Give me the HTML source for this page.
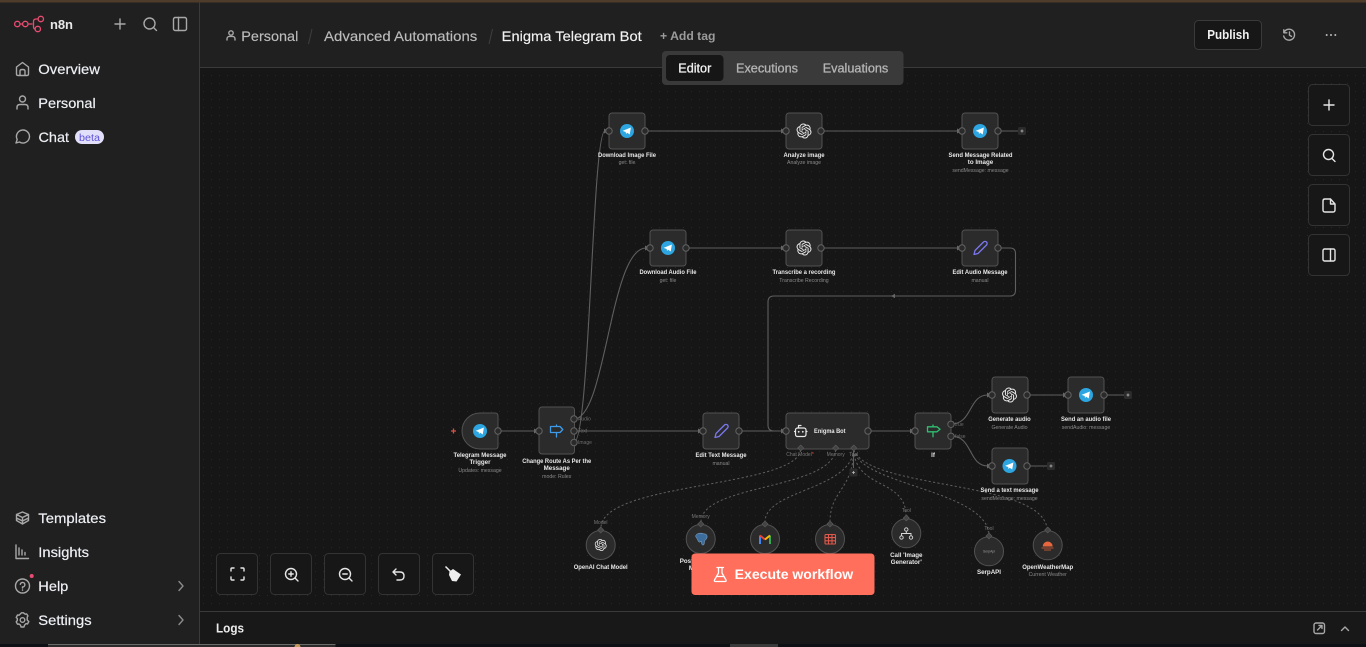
<!DOCTYPE html>
<html lang="en">
<head>
<meta charset="utf-8">
<title>Enigma Telegram Bot - n8n</title>
<style>
html,body{margin:0;padding:0;width:1366px;height:647px;overflow:hidden;background:#161616}
svg{display:block;font-family:"Liberation Sans",sans-serif}
.n{fill:#2b2b2b;stroke:#525252;stroke-width:1}
.p{fill:#2a2a2a;stroke:#636363;stroke-width:1}
.e{fill:none;stroke:#5f5f5f;stroke-width:1.1}
.d{fill:none;stroke:#5f5f5f;stroke-width:1;stroke-dasharray:2.2 2.2}
.a{fill:#666}
.t{font-size:6.2px;font-weight:700;fill:#e8e8e8;text-anchor:middle}
.s{font-size:5.2px;fill:#8a8a8a;text-anchor:middle}
.l{font-size:5px;fill:#777;text-anchor:middle}
.pl{font-size:5px;fill:#6d6d6d}
.m{font-size:14px;fill:#eef0f5;stroke:#eef0f5;stroke-width:.2px}
.tab{font-size:13px;fill:#b4b4b4;stroke:#b4b4b4;stroke-width:.3px}
.i{fill:none;stroke:#a8a8a8;stroke-width:1.4;stroke-linecap:round;stroke-linejoin:round}
.w{fill:none;stroke:#e6e6e6;stroke-width:1.4;stroke-linecap:round;stroke-linejoin:round}
.b{fill:#171717;stroke:#333;stroke-width:1}
</style>
</head>
<body>
<svg width="1366" height="647" viewBox="0 0 1366 647" xmlns="http://www.w3.org/2000/svg">
<defs>
<pattern id="dots" x="0" y="0" width="8" height="8" patternUnits="userSpaceOnUse"><rect x="3" y="3" width="1" height="1" fill="#272727"/></pattern>
<symbol id="tg" viewBox="-7 -7 14 14" overflow="visible"><circle r="7" fill="#2ca5e0"/><path d="M-4.400 -.1L3.900 -3.500L2.700 3.500L.2 1.800L-1 3L-1.300 1Z" fill="#fff"/></symbol>
<symbol id="oai" viewBox="0 0 24 24"><path fill="#e8e8e8" d="M22.2819 9.8211a5.9847 5.9847 0 0 0-.5157-4.9108 6.0462 6.0462 0 0 0-6.5098-2.9A6.0651 6.0651 0 0 0 4.9807 4.1818a5.9847 5.9847 0 0 0-3.9977 2.9 6.0462 6.0462 0 0 0 .7427 7.0966 5.98 5.98 0 0 0 .511 4.9107 6.051 6.051 0 0 0 6.5146 2.9001A5.9847 5.9847 0 0 0 13.2599 24a6.0557 6.0557 0 0 0 5.7718-4.2058 5.9894 5.9894 0 0 0 3.9977-2.9001 6.0557 6.0557 0 0 0-.7475-7.0729zm-9.022 12.6081a4.4755 4.4755 0 0 1-2.8764-1.0408l.1419-.0804 4.7783-2.7582a.7948.7948 0 0 0 .3927-.6813v-6.7369l2.02 1.1686a.071.071 0 0 1 .038.052v5.5826a4.504 4.504 0 0 1-4.4945 4.4944zm-9.6607-4.1254a4.4708 4.4708 0 0 1-.5346-3.0137l.142.0852 4.783 2.7582a.7712.7712 0 0 0 .7806 0l5.8428-3.3685v2.3324a.0804.0804 0 0 1-.0332.0615L9.74 19.9502a4.4992 4.4992 0 0 1-6.1408-1.6464zM2.3408 7.8956a4.485 4.485 0 0 1 2.3655-1.9728V11.6a.7664.7664 0 0 0 .3879.6765l5.8144 3.3543-2.0201 1.1685a.0757.0757 0 0 1-.071 0l-4.8303-2.7865A4.504 4.504 0 0 1 2.3408 7.872zm16.5963 3.8558L13.1038 8.364 15.1192 7.2a.0757.0757 0 0 1 .071 0l4.8303 2.7913a4.4944 4.4944 0 0 1-.6765 8.1042v-5.6772a.79.79 0 0 0-.407-.667zm2.0107-3.0231l-.142-.0852-4.7735-2.7818a.7759.7759 0 0 0-.7854 0L9.409 9.2297V6.8974a.0662.0662 0 0 1 .0284-.0615l4.8303-2.7866a4.4992 4.4992 0 0 1 6.6802 4.66zM8.3065 12.863l-2.02-1.1638a.0804.0804 0 0 1-.038-.0567V6.0742a4.4992 4.4992 0 0 1 7.3757-3.4537l-.142.0805L8.704 5.459a.7948.7948 0 0 0-.3927.6813zm1.0976-2.3654l2.602-1.4998 2.6069 1.4998v2.9994l-2.5974 1.4997-2.6067-1.4997Z"/></symbol>
</defs>

<!-- base -->
<rect width="1366" height="647" fill="#161616"/>
<rect x="200" y="68" width="1166" height="543" fill="url(#dots)"/>

<!-- edges -->
<path class="e" d="M498 431H535M574 431H699M739 431H782M869 431H911M1027 395H1064M645 131H782M821 131H958M686 248H782M821 248H958M998 131H1018M1104 395H1124M1027 466H1047"/>
<path class="e" d="M574 442C590 442 592 131 605 131"/>
<path class="e" d="M574 419C606 419 610 248 646 248"/>
<path class="e" d="M951 424C973 424 968 395 988 395"/>
<path class="e" d="M951 436C973 436 968 466 988 466"/>
<path class="e" d="M998 248H1010Q1015.500 248 1015.500 253.500V290Q1015.500 296 1010 296H774Q768 296 768 302V425Q768 431 774 431H782"/>
<path class="e" d="M853.500 452V468"/>
<g class="a">
<path d="M539 431l-5 -2.500v5zM703 431l-5 -2.500v5zM786 431l-5 -2.500v5zM915 431l-5 -2.500v5zM1068 395l-5 -2.500v5zM609 131l-5 -2.500v5zM786 131l-5 -2.500v5zM962 131l-5 -2.500v5zM650 248l-5 -2.500v5zM786 248l-5 -2.500v5zM962 248l-5 -2.500v5zM992 395l-5 -2.500v5zM992 466l-5 -2.500v5zM891 296l4 -2.200v4.400z"/>
</g>

<!-- dashed edges -->
<path class="d" d="M800.700 450C795 488 601 482 601 528"/>
<path class="d" d="M835.700 450C830 490 701 484 701 522"/>
<path class="d" d="M853.700 450C850 490 765 490 765 522"/>
<path class="d" d="M853.700 450C853 490 830 490 830 522"/>
<path class="d" d="M853.700 450C856 490 906 478 906 516"/>
<path class="d" d="M853.700 450C860 485 985 490 989 534"/>
<path class="d" d="M853.700 450C870 490 1040 480 1047 528"/>

<!-- square nodes -->
<rect class="n" x="609" y="113" width="36" height="36" rx="3"/>
<rect class="n" x="786" y="113" width="36" height="36" rx="3"/>
<rect class="n" x="962" y="113" width="36" height="36" rx="3"/>
<rect class="n" x="650" y="230" width="36" height="36" rx="3"/>
<rect class="n" x="786" y="230" width="36" height="36" rx="3"/>
<rect class="n" x="962" y="230" width="36" height="36" rx="3"/>
<path class="n" d="M480 413H495Q498 413 498 416V446Q498 449 495 449H480A18 18 0 0 1 462 431A18 18 0 0 1 480 413Z"/>
<rect class="n" x="539" y="407" width="35.500" height="47" rx="3"/>
<rect class="n" x="703" y="413" width="36" height="36" rx="3"/>
<rect class="n" x="786" y="413" width="83" height="36" rx="3"/>
<rect class="n" x="915" y="413" width="36" height="36" rx="3"/>
<rect class="n" x="992" y="377" width="36" height="36" rx="3"/>
<rect class="n" x="1068" y="377" width="36" height="36" rx="3"/>
<rect class="n" x="992" y="448" width="36" height="36" rx="3"/>

<!-- circle nodes -->
<g class="n">
<circle cx="600.700" cy="545" r="14.500"/><circle cx="700.700" cy="539" r="14.500"/><circle cx="765" cy="539" r="14.500"/><circle cx="830" cy="539" r="14.500"/><circle cx="906.300" cy="533.300" r="14.500"/><circle cx="989" cy="551.300" r="14.500"/><circle cx="1047.700" cy="545.300" r="14.500"/>
</g>

<!-- ports -->
<g class="p">
<circle cx="609" cy="131" r="3.200"/><circle cx="645" cy="131" r="3.200"/><circle cx="786" cy="131" r="3.200"/><circle cx="821" cy="131" r="3.200"/><circle cx="962" cy="131" r="3.200"/><circle cx="998" cy="131" r="3.200"/>
<circle cx="650" cy="248" r="3.200"/><circle cx="686" cy="248" r="3.200"/><circle cx="786" cy="248" r="3.200"/><circle cx="821" cy="248" r="3.200"/><circle cx="962" cy="248" r="3.200"/><circle cx="998" cy="248" r="3.200"/>
<circle cx="498" cy="431" r="3.200"/><circle cx="539" cy="431" r="3.200"/><circle cx="574" cy="419" r="3.200"/><circle cx="574" cy="431" r="3.200"/><circle cx="574" cy="442.500" r="3.200"/>
<circle cx="703" cy="431" r="3.200"/><circle cx="739" cy="431" r="3.200"/><circle cx="786" cy="431" r="3.200"/><circle cx="868" cy="431" r="3.200"/><circle cx="915" cy="431" r="3.200"/><circle cx="951" cy="424.300" r="3.200"/><circle cx="951" cy="436.300" r="3.200"/>
<circle cx="992" cy="395" r="3.200"/><circle cx="1027" cy="395" r="3.200"/><circle cx="1068" cy="395" r="3.200"/><circle cx="1104" cy="395" r="3.200"/><circle cx="992" cy="466" r="3.200"/><circle cx="1027" cy="466" r="3.200"/>
</g>

<!-- diamonds -->
<g fill="#444" stroke="#5e5e5e" stroke-width=".6">
<path d="M800.700 445l3 3l-3 3l-3 -3z"/><path d="M835.700 445l3 3l-3 3l-3 -3z"/><path d="M853.700 445l3 3l-3 3l-3 -3z"/>
<path d="M600.700 527l3 3l-3 3l-3 -3z"/><path d="M700.700 521l3 3l-3 3l-3 -3z"/><path d="M765 521l3 3l-3 3l-3 -3z"/><path d="M830 521l3 3l-3 3l-3 -3z"/><path d="M906.300 515l3 3l-3 3l-3 -3z"/><path d="M989 533l3 3l-3 3l-3 -3z"/><path d="M1047.700 527l3 3l-3 3l-3 -3z"/>
</g>

<!-- small plus -->
<g>
<rect x="1018" y="127" width="8" height="8" rx="1.500" fill="#2b2b2b"/><path d="M1020.500 131h3M1022 129.500v3" stroke="#bbb" stroke-width=".8"/>
<rect x="1124" y="391" width="8" height="8" rx="1.500" fill="#2b2b2b"/><path d="M1126.500 395h3M1128 393.500v3" stroke="#bbb" stroke-width=".8"/>
<rect x="1047" y="462" width="8" height="8" rx="1.500" fill="#2b2b2b"/><path d="M1049.500 466h3M1051 464.500v3" stroke="#bbb" stroke-width=".8"/>
<rect x="849.500" y="468.500" width="8" height="8" rx="1.500" fill="#2b2b2b"/><path d="M852 472.500h3M853.500 471v3" stroke="#bbb" stroke-width=".8"/>
</g>

<!-- node icons -->
<use href="#tg" x="620" y="124" width="14" height="14"/>
<use href="#tg" x="973" y="124" width="14" height="14"/>
<use href="#tg" x="661" y="241" width="14" height="14"/>
<use href="#tg" x="473" y="424" width="14" height="14"/>
<use href="#tg" x="1079" y="388" width="14" height="14"/>
<use href="#tg" x="1002.500" y="459" width="14" height="14"/>
<use href="#oai" x="796.500" y="123.500" width="15" height="15"/>
<use href="#oai" x="796.500" y="240.500" width="15" height="15"/>
<use href="#oai" x="1002" y="387.500" width="15" height="15"/>
<use href="#oai" x="594.700" y="539" width="12" height="12"/>

<!-- pencil icons -->
<g fill="none" stroke="#7b78ee" stroke-width="1.300" stroke-linejoin="round">
<path d="M974 254.500l1 -4l8.500 -8.500a1.800 1.800 0 0 1 3 3l-8.500 8.500z"/>
<path d="M715 437.500l1 -4l8.500 -8.500a1.800 1.800 0 0 1 3 3l-8.500 8.500z"/>
</g>

<!-- switch icon -->
<path d="M556.500 425V426.500M556.500 432.500V437M550.500 426.500H560L562.800 429.500L560 432.500H550.500Z" fill="none" stroke="#3f9be8" stroke-width="1.300" stroke-linejoin="round" stroke-linecap="round"/>
<!-- if icon -->
<path d="M933 425V426.800M933 431.800V436.800M927.500 426.800H937L940 429.300L937 431.800H927.500Z" fill="none" stroke="#2fbf71" stroke-width="1.300" stroke-linejoin="round" stroke-linecap="round"/>
<!-- robot icon -->
<g fill="none" stroke="#e8e8e8" stroke-width="1.200" stroke-linejoin="round" stroke-linecap="round">
<rect x="795.500" y="428" width="10.500" height="8.500" rx="2"/>
<path d="M798.500 428V425.500H801M795.500 431.500H794.500M806 431.500H807"/>
</g>
<circle cx="798.700" cy="431.800" r=".9" fill="#e8e8e8"/><circle cx="802.800" cy="431.800" r=".9" fill="#e8e8e8"/>

<!-- postgres icon -->
<path d="M696 535c1.500 -2 6 -2.500 8 -1c2 -.5 3.500 1 3 3.500c-.5 2 -2 2.500 -2.500 3.500l-.5 3.500c-1 1 -2 .5 -2.300 -.5l-.2 -2.500l-1.500 .5c-1 .5 -1.800 -.5 -2.200 -2c-.6 -1.500 -2.800 -3 -1.800 -5z" fill="#3d6d9c" stroke="#8fb7dc" stroke-width=".5"/>
<!-- gmail icon -->
<g fill="none" stroke-width="2">
<path d="M760 544V535.500" stroke="#4285f4"/><path d="M770 544V535.500" stroke="#34a853"/><path d="M760 535.500L765 539.500" stroke="#ea4335"/><path d="M765 539.500L770 535.500" stroke="#fbbc04"/>
</g>
<!-- sheet icon -->
<g fill="none" stroke="#e2584a" stroke-width="1.100"><rect x="825" y="534.500" width="10.500" height="9.500" rx="1"/><path d="M825 537.600H835.500M825 540.800H835.500M828.500 534.500V544M832 534.500V544"/></g>
<!-- call workflow icon -->
<g fill="none" stroke="#dcdcdc" stroke-width=".9"><circle cx="906.300" cy="529.500" r="1.700"/><circle cx="901.500" cy="537.500" r="1.700"/><circle cx="911" cy="537.500" r="1.700"/><path d="M906.300 531.200V533.500M901.500 535.800V533.500H911V535.800"/></g>
<!-- serp icon -->
<text x="989" y="552.700" font-size="3.400" fill="#9a9a9a" text-anchor="middle">SerpApi</text>
<!-- weather icon -->
<path d="M1042.700 546.500a5 5 0 0 1 10 0z" fill="#e8663d"/><path d="M1041.500 548h12M1044 550h7" stroke="#e8663d" stroke-width=".8" fill="none"/>

<!-- node labels -->
<text class="t" x="627" y="157" textLength="58" lengthAdjust="spacingAndGlyphs">Download Image File</text>
<text class="s" x="627" y="164">get: file</text>
<text class="t" x="804" y="157" textLength="41" lengthAdjust="spacingAndGlyphs">Analyze image</text>
<text class="s" x="804" y="164">Analyze image</text>
<text class="t" x="980.500" y="157" textLength="64" lengthAdjust="spacingAndGlyphs">Send Message Related</text>
<text class="t" x="980.500" y="164">to Image</text>
<text class="s" x="980.500" y="172">sendMessage: message</text>
<text class="t" x="668" y="274" textLength="57" lengthAdjust="spacingAndGlyphs">Download Audio File</text>
<text class="s" x="668" y="282">get: file</text>
<text class="t" x="804" y="274" textLength="63" lengthAdjust="spacingAndGlyphs">Transcribe a recording</text>
<text class="s" x="804" y="282">Transcribe Recording</text>
<text class="t" x="980" y="274" textLength="55" lengthAdjust="spacingAndGlyphs">Edit Audio Message</text>
<text class="s" x="980" y="282">manual</text>
<text class="t" x="480" y="457" textLength="53" lengthAdjust="spacingAndGlyphs">Telegram Message</text>
<text class="t" x="480" y="464">Trigger</text>
<text class="s" x="480" y="472">Updates: message</text>
<text class="t" x="556.700" y="463" textLength="69" lengthAdjust="spacingAndGlyphs">Change Route As Per the</text>
<text class="t" x="556.700" y="470">Message</text>
<text class="s" x="556.700" y="478">mode: Rules</text>
<text class="t" x="721" y="457" textLength="51" lengthAdjust="spacingAndGlyphs">Edit Text Message</text>
<text class="s" x="721" y="465">manual</text>
<text class="t" x="829.800" y="433" textLength="31.500" lengthAdjust="spacingAndGlyphs">Enigma Bot</text>
<text class="t" x="933" y="457">If</text>
<text class="t" x="1009.500" y="421" textLength="42.500" lengthAdjust="spacingAndGlyphs">Generate audio</text>
<text class="s" x="1009.500" y="429">Generate Audio</text>
<text class="t" x="1086" y="421" textLength="50" lengthAdjust="spacingAndGlyphs">Send an audio file</text>
<text class="s" x="1086" y="429">sendAudio: message</text>
<text class="t" x="1009.500" y="492" textLength="58" lengthAdjust="spacingAndGlyphs">Send a text message</text>
<text class="s" x="1009.500" y="500">sendMessage: message</text>
<text class="t" x="600.700" y="569" textLength="54" lengthAdjust="spacingAndGlyphs">OpenAI Chat Model</text>
<text class="t" x="700.700" y="563">Postgres Chat</text>
<text class="t" x="700.700" y="570">Memory</text>
<text class="t" x="906.300" y="557">Call 'Image</text>
<text class="t" x="906.300" y="564">Generator'</text>
<text class="t" x="989" y="574">SerpAPI</text>
<text class="t" x="1047.700" y="569" textLength="51" lengthAdjust="spacingAndGlyphs">OpenWeatherMap</text>
<text class="s" x="1047.700" y="576">Current Weather</text>

<!-- connector labels -->
<text class="pl" x="578" y="420.500">Audio</text>
<text class="pl" x="578" y="432.500">Text</text>
<text class="pl" x="578" y="444">Image</text>
<text class="pl" x="955" y="426">true</text>
<text class="pl" x="955" y="438">false</text>
<text class="l" x="800" y="456">Chat Model<tspan fill="#e0503f">*</tspan></text>
<text class="l" x="835.700" y="456">Memory</text>
<text class="l" x="853.700" y="456">Tool</text>
<text class="l" x="600.700" y="524">Model</text>
<text class="l" x="700.700" y="518">Memory</text>
<text class="l" x="906.300" y="512">Tool</text>
<text class="l" x="989" y="530">Tool</text>
<path d="M451 431h5M453.500 428.500v5" stroke="#e0503f" stroke-width="1.300"/>

<!-- header -->
<rect x="200" y="2" width="1166" height="65" fill="#202020"/>
<rect x="200" y="67" width="1166" height="1" fill="#3a3a3a"/>
<rect x="0" y="0" width="1366" height="2.500" fill="#4f3b2a"/>
<g class="i" stroke-width="1"><circle cx="231" cy="33" r="2.200"/><path d="M227 40v-1.200a2.400 2.400 0 0 1 2.400 -2.400h3.200a2.400 2.400 0 0 1 2.400 2.400v1.200"/></g>
<text x="241.300" y="41" font-size="14" fill="#bcbcbc" stroke="#bcbcbc" stroke-width=".15" textLength="57" lengthAdjust="spacingAndGlyphs">Personal</text>
<path d="M312 29L308.500 44" stroke="#3f3f3f" stroke-width="1"/>
<text x="324" y="41" font-size="14" fill="#bcbcbc" stroke="#bcbcbc" stroke-width=".15" textLength="153.300" lengthAdjust="spacingAndGlyphs">Advanced Automations</text>
<path d="M492.500 29L489 44" stroke="#3f3f3f" stroke-width="1"/>
<text x="501.700" y="41" font-size="14" fill="#f2f2f2" stroke="#f2f2f2" stroke-width=".15" textLength="140" lengthAdjust="spacingAndGlyphs">Enigma Telegram Bot</text>
<text x="660" y="40" font-size="12" font-weight="700" fill="#9b9b9b" textLength="55.500" lengthAdjust="spacingAndGlyphs">+ Add tag</text>

<!-- tabs -->
<rect x="662" y="51" width="241.500" height="34" rx="4" fill="#3a3a3a"/>
<rect x="666" y="55" width="57.500" height="26" rx="4" fill="#161616"/>
<text class="tab" x="678.300" y="72.500" style="fill:#f2f2f2;stroke:#f2f2f2" textLength="33" lengthAdjust="spacingAndGlyphs">Editor</text>
<text class="tab" x="736" y="72.500" textLength="62" lengthAdjust="spacingAndGlyphs">Executions</text>
<text class="tab" x="822.700" y="72.500" textLength="65.600" lengthAdjust="spacingAndGlyphs">Evaluations</text>

<!-- publish -->
<rect x="1194.500" y="20.500" width="67" height="29" rx="4" fill="#171717" stroke="#3a3a3a"/>
<text x="1207.300" y="39" font-size="13" font-weight="700" fill="#f2f2f2" textLength="42" lengthAdjust="spacingAndGlyphs">Publish</text>
<g class="i" stroke-width="1.200"><path d="M1284 32.500a5.500 5.500 0 1 1 -.3 3.500M1283.800 29.800v3h3M1289.500 32v3.200l2 1.200"/></g>
<circle cx="1326.700" cy="35" r="1" fill="#bbb"/><circle cx="1331" cy="35" r="1" fill="#bbb"/><circle cx="1335.300" cy="35" r="1" fill="#bbb"/>

<!-- right buttons -->
<rect class="b" x="1308.500" y="84.500" width="41" height="41" rx="4"/>
<rect class="b" x="1308.500" y="134.500" width="41" height="41" rx="4"/>
<rect class="b" x="1308.500" y="184.500" width="41" height="41" rx="4"/>
<rect class="b" x="1308.500" y="234.500" width="41" height="41" rx="4"/>
<g class="w"><path d="M1329 100V110M1324 105H1334"/><circle cx="1328.500" cy="154.500" r="5"/><path d="M1332 158.500L1335 161.500"/>
<path d="M1330.500 199H1325Q1323 199 1323 201V210Q1323 212 1325 212H1333Q1335 212 1335 210V204ZM1330.500 199V204H1335"/>
<rect x="1323" y="249" width="12" height="12" rx="1.500"/><path d="M1330.500 249V261"/></g>

<!-- bottom buttons -->
<rect class="b" x="216.500" y="553.500" width="41" height="41" rx="4"/>
<rect class="b" x="270.500" y="553.500" width="41" height="41" rx="4"/>
<rect class="b" x="324.500" y="553.500" width="41" height="41" rx="4"/>
<rect class="b" x="378.500" y="553.500" width="41" height="41" rx="4"/>
<rect class="b" x="432.500" y="553.500" width="41" height="41" rx="4"/>
<g class="w">
<path d="M231 571V569Q231 568 232 568H234M241 568H243Q244 568 244 569V571M244 577V579Q244 580 243 580H241M234 580H232Q231 580 231 579V577"/>
<circle cx="291" cy="574" r="5.500"/><path d="M295 578L298 581M288.800 574H293.200M291 571.800V576.200"/>
<circle cx="345" cy="574" r="5.500"/><path d="M349 578L352 581M342.800 574H347.200"/>
<path d="M396 569L393 572L396 575M393 572H400Q404 572 404 576Q404 580 400 580H397"/>
</g>
<path d="M449.500 571.500L453 569L461 574.500L456.500 581.500L452 581L449 575Z" fill="#eee"/>
<path d="M445.500 566.500L451 572" stroke="#eee" stroke-width="1.500"/>

<!-- logs -->
<rect x="200" y="612" width="1166" height="32" fill="#181818"/>
<rect x="200" y="611" width="1166" height="1" fill="#3a3a3a"/>
<text x="216" y="632.500" font-size="13" font-weight="700" fill="#ececec" textLength="28" lengthAdjust="spacingAndGlyphs">Logs</text>
<g class="i" stroke-width="1.200"><rect x="1314" y="623" width="10.500" height="10.500" rx="2"/><path d="M1317.500 630L1322 625.500M1319 625.500H1322V628.500"/><path d="M1341.500 630.500L1345 627L1348.500 630.500"/></g>

<!-- execute button -->
<rect x="691.500" y="553.500" width="183" height="41.500" rx="3.500" fill="#ff6f5c"/>
<path d="M717 567.500H723.500M718.500 567.500V573L714.500 580Q714 581.500 715.500 581.500H725Q726.500 581.500 726 580L722 573V567.500M716.500 576.500H724" fill="none" stroke="#fff" stroke-width="1.300" stroke-linejoin="round" stroke-linecap="round"/>
<text x="734.700" y="579" font-size="14" font-weight="700" fill="#fff" textLength="118.500" lengthAdjust="spacingAndGlyphs">Execute workflow</text>

<!-- sidebar -->
<rect x="0" y="2.500" width="199" height="641.500" fill="#202020"/>
<rect x="199" y="2.500" width="1" height="641.500" fill="#3a3a3a"/>

<!-- logo -->
<g fill="none" stroke="#ea4b71" stroke-width="1.300">
<circle cx="17.300" cy="24" r="2.700"/><circle cx="25.300" cy="24" r="2.700"/><circle cx="40.800" cy="19" r="2.700"/><circle cx="37.800" cy="29" r="2.700"/>
<path d="M20 24H22.600M28 24H32.500M38 19H36Q33.500 19 33.500 21.500V26.500Q33.500 29 35.100 29"/>
</g>
<text x="50" y="29" font-size="13" font-weight="700" fill="#e8e8e8" textLength="23" lengthAdjust="spacing">n8n</text>
<g class="i"><path d="M120 19V29M115 24H125"/><circle cx="149.500" cy="23.500" r="5.500"/><path d="M153.500 27.500L156.500 30.500"/><rect x="173.500" y="17.500" width="13" height="13" rx="1.800"/><path d="M178.500 17.500V30.500"/></g>

<!-- sidebar items -->
<g class="i">
<path d="M16.500 67L22.500 62.500L28.500 67V74Q28.500 75.500 27 75.500H18Q16.500 75.500 16.500 74ZM20 75.500V71Q20 69.500 22.500 69.500Q25 69.500 25 71V75.500"/>
<circle cx="22.500" cy="99" r="3"/><path d="M17 109V107.500Q17 104.500 20 104.500H25Q28 104.500 28 107.500V109"/>
<path d="M16 143L17.200 139.500A6.500 6.500 0 1 1 19.500 142Z"/>
<path d="M22.500 512L28.500 514.500V520.500L22.500 524L16.500 520.500V514.500ZM16.500 514.500L22.500 517.500L28.500 514.500M22.500 517.500V524M16.500 518L22.500 521L28.500 518"/>
<path d="M16 545V558.500H28.500M19 555V548M22 555V550M25 555V552.500"/>
<circle cx="22.500" cy="586" r="7"/><path d="M20.300 584.300A2.300 2.300 0 1 1 22.500 587V588M22.500 590V590.200"/>
<path d="M179 581.500L183 586L179 590.500M179 615.500L183 620L179 624.500" stroke="#8a8a8a"/>
<circle cx="22.500" cy="620" r="2.300"/>
<path d="M20.800 613.500L21.500 612.800H23.500L24.200 613.500L25.500 614.200L26.600 613.900L28 616L27.200 617V620L28.800 621.500L27.500 624L26 623.600L24.500 625.200L24 627H21L20.500 625.200L19 624L17.500 624.200L16.200 621.800L17.300 620.500V618.500L16.200 617.500L17.500 615L19 615.200Z"/>
</g>
<circle cx="31.700" cy="576" r="2" fill="#ea4b71"/>
<text class="m" x="38.300" y="74" textLength="61.700" lengthAdjust="spacingAndGlyphs">Overview</text>
<text class="m" x="38.300" y="108" textLength="57.400" lengthAdjust="spacingAndGlyphs">Personal</text>
<text class="m" x="38.500" y="142" textLength="30.500" lengthAdjust="spacingAndGlyphs">Chat</text>
<rect x="75" y="130" width="29" height="14" rx="7" fill="#e2dffb"/>
<text x="89.500" y="141" font-size="10" fill="#5f54d8" text-anchor="middle" textLength="21" lengthAdjust="spacingAndGlyphs">beta</text>
<text class="m" x="38.300" y="523" textLength="67.700" lengthAdjust="spacingAndGlyphs">Templates</text>
<text class="m" x="38.300" y="557" textLength="50.700" lengthAdjust="spacingAndGlyphs">Insights</text>
<text class="m" x="38.300" y="591" textLength="30" lengthAdjust="spacingAndGlyphs">Help</text>
<text class="m" x="38.300" y="625" textLength="53.300" lengthAdjust="spacingAndGlyphs">Settings</text>

<!-- bottom strip -->
<rect x="0" y="644" width="1366" height="3" fill="#0d1113"/>
<rect x="48" y="644" width="287.500" height="3" fill="#2b2b2b"/>
<rect x="48" y="644" width="287.500" height="1" fill="#6a6a6a"/>
<circle cx="297.500" cy="647" r="3" fill="#c79a5a"/>
<rect x="730" y="644" width="48" height="3" fill="#3a3a3a"/>
</svg>
</body>
</html>
